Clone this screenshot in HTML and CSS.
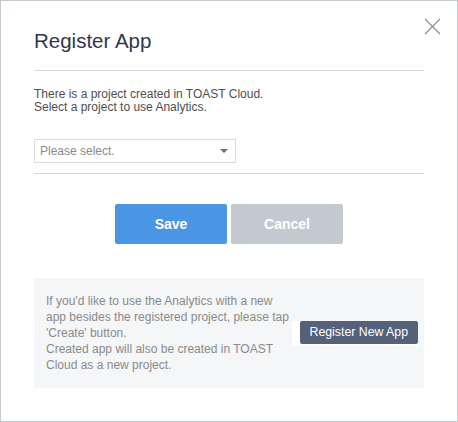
FILE: index.html
```html
<!DOCTYPE html>
<html lang="en">
<head>
<meta charset="utf-8">
<title>Register App</title>
<link rel="stylesheet" href="styles.css">
</head>
<body>
<div class="dialog">
  <button class="close" aria-label="Close">
    <svg width="17" height="17" viewBox="0 0 17 17"><path d="M1 1 L16 16 M16 1 L1 16" stroke="#8a8d93" stroke-width="1.2" fill="none"/></svg>
  </button>
  <h1 class="title">Register App</h1>
  <hr class="rule">
  <p class="intro">There is a project created in TOAST Cloud.<br>Select a project to use Analytics.</p>
  <div class="select">
    <span class="placeholder">Please select.</span>
    <span class="caret"></span>
  </div>
  <hr class="rule rule-low">
  <div class="actions">
    <button class="btn btn-save">Save</button>
    <button class="btn btn-cancel">Cancel</button>
  </div>
  <div class="notice">
    <p class="notice-text">If you'd like to use the Analytics with a new app besides the registered project, please tap 'Create' button.<br>Created app will also be created in TOAST Cloud as a new project.</p>
    <div class="notice-action"><button class="btn-new">Register New App</button></div>
  </div>
</div>
</body>
</html>
```
FILE: styles.css
```css
* { box-sizing: border-box; }
html, body { margin: 0; padding: 0; background: #fff; }
body { font-family: "Liberation Sans", Arial, sans-serif; }

.dialog {
  position: relative;
  width: 458px;
  height: 422px;
  border: 1px solid #c6c9d0;
  background: #fff;
  padding: 28px 33px 0 33px;
}

.close {
  position: absolute;
  top: 17px;
  right: 16px;
  width: 17px;
  height: 17px;
  padding: 0;
  border: 0;
  background: none;
  display: block;
}
.close svg { display: block; }

.title {
  margin: 0;
  font-size: 20.5px;
  line-height: 24px;
  font-weight: normal;
  color: #2f3850;
}

.rule {
  margin: 17px 0 0 0;
  border: 0;
  height: 1px;
  background: #d6d9df;
}

.intro {
  margin: 17px 0 0 0;
  font-size: 12px;
  line-height: 13px;
  color: #4e4e4e;
}

.select {
  margin-top: 25px;
  width: 202px;
  height: 24px;
  border: 1px solid #d8dbe0;
  display: flex;
  align-items: center;
  justify-content: space-between;
  padding: 0 7px 0 5px;
}
.placeholder {
  font-size: 12px;
  color: #8a8a8a;
}
.caret {
  width: 0;
  height: 0;
  border-left: 4px solid transparent;
  border-right: 4px solid transparent;
  border-top: 4px solid #6b6f7a;
}

.rule-low { margin-top: 10px; }

.actions {
  margin-top: 30px;
  display: flex;
  justify-content: center;
  gap: 4px;
}
.btn {
  width: 112px;
  height: 40px;
  border: 0;
  border-radius: 2px;
  color: #fff;
  font-family: "Liberation Sans", Arial, sans-serif;
  font-size: 14px;
  font-weight: bold;
}
.btn-save { background: #4a96e4; }
.btn-cancel { background: #c3c9d1; }

.notice {
  margin-top: 34px;
  background: #f5f6f8;
  padding: 15px 6px 15px 12px;
  display: flex;
  align-items: center;
}
.notice-text {
  margin: 0;
  width: 246px;
  font-size: 12px;
  line-height: 16px;
  color: #8a8a8a;
}
.notice-action {
  background: #fff;
  padding: 0 0 2px 8px;
}
.btn-new {
  display: block;
  height: 23px;
  padding: 0 10px;
  border: 0;
  border-radius: 2px;
  background: #55607b;
  color: #fff;
  font-family: "Liberation Sans", Arial, sans-serif;
  font-size: 12.3px;
  white-space: nowrap;
}
```
